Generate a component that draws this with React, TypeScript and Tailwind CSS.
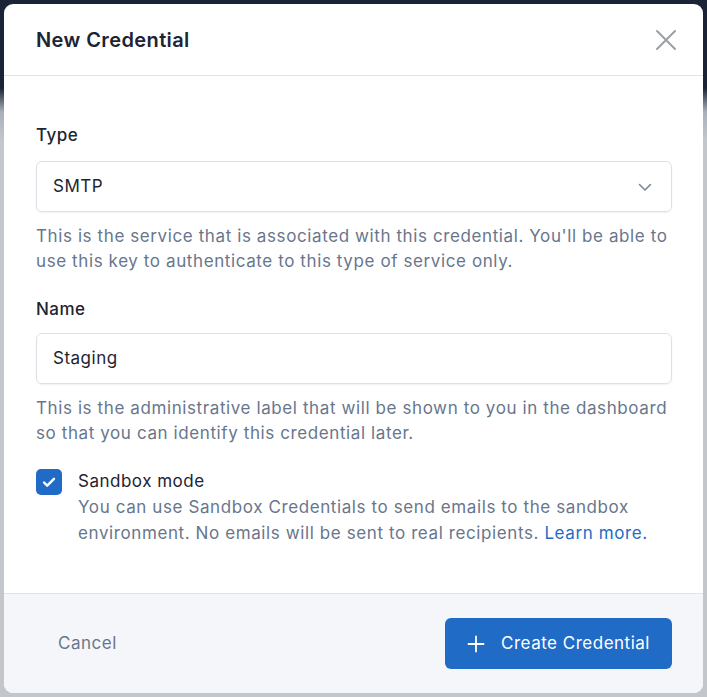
import React from "react";

export default function App() {
  return (
    <div
      className="w-[707px] h-[697px] p-[4px] bg-[linear-gradient(180deg,#1a2436_0px,#1a2436_88px,#a9b0ba_112px,#c3c7cc_140px,#c3c7cc_697px)]"
      style={{ fontFamily: "Inter, 'Noto Sans', sans-serif" }}
    >
      <div className="w-[699px] h-[689px] bg-white rounded-[9px] overflow-hidden flex flex-col tracking-[0.5px]">
        <div className="h-[72px] flex items-center justify-between pl-[32px] pr-[26px] border-b border-[#dfe3ea] shrink-0">
          <h2 className="text-[20px] font-semibold text-[#1d2433] tracking-[0.4px]">New Credential</h2>
          <svg width="22" height="22" viewBox="0 0 22 22" className="text-[#9aa0a8]">
            <path d="M2 2L20 20M20 2L2 20" stroke="currentColor" strokeWidth="2" strokeLinecap="round" />
          </svg>
        </div>
        <div className="flex-1 pl-[32px] pr-[31px] pt-[46px]">
          <label className="block text-[17px] font-medium text-[#1d2433] leading-[26px]">Type</label>
          <div className="mt-[13px] h-[51px] rounded-[6px] border border-[#dde1e7] shadow-[0_1px_2px_rgba(16,24,40,0.06)] flex items-center justify-between pl-[16px] pr-[17px]">
            <span className="text-[17px] text-[#1d2433]">SMTP</span>
            <svg width="18" height="18" viewBox="0 0 18 18" className="text-[#7b8698]">
              <path d="M3.5 6.5l5.5 5.5 5.5-5.5" stroke="currentColor" strokeWidth="1.6" fill="none" strokeLinecap="round" strokeLinejoin="round" />
            </svg>
          </div>
          <p className="mt-[12px] text-[17px] leading-[25px] text-[#68768c] tracking-[0.6px]">
            This is the service that is associated with this credential. You'll be able to use this key to authenticate to this type of service only.
          </p>
          <label className="block mt-[22px] text-[17px] font-medium text-[#1d2433] leading-[26px]">Name</label>
          <div className="mt-[11px] h-[51px] rounded-[6px] border border-[#dde1e7] shadow-[0_1px_2px_rgba(16,24,40,0.06)] flex items-center pl-[16px]">
            <span className="text-[17px] text-[#1d2433]">Staging</span>
          </div>
          <p className="mt-[12px] text-[17px] leading-[25px] text-[#68768c] tracking-[0.6px]">
            This is the administrative label that will be shown to you in the dashboard so that you can identify this credential later.
          </p>
          <div className="mt-[22px] flex items-start gap-[16px]">
            <div className="w-[26px] h-[26px] mt-[1px] rounded-[5px] bg-[#1f6bc6] flex items-center justify-center shrink-0">
              <svg width="18" height="18" viewBox="0 0 18 18">
                <path d="M4 9.5l3.2 3.2L14 5.8" stroke="white" strokeWidth="2.4" fill="none" strokeLinecap="round" strokeLinejoin="round" />
              </svg>
            </div>
            <div>
              <div className="text-[17px] leading-[26px] text-[#1d2433]">Sandbox mode</div>
              <p className="text-[17px] leading-[26px] text-[#68768c] tracking-[0.6px]">
                You can use Sandbox Credentials to send emails to the sandbox environment. No emails will be sent to real recipients.{" "}
                <span className="text-[#1f6bc6]">Learn more.</span>
              </p>
            </div>
          </div>
        </div>
        <div className="h-[100px] bg-[#f5f6fa] border-t border-[#dfe3ea] flex items-center justify-between pl-[54px] pr-[31px] shrink-0">
          <span className="text-[17px] text-[#68768c]">Cancel</span>
          <div className="h-[51px] w-[227px] rounded-[6px] bg-[#1f6bc6] flex items-center justify-center gap-[16px] text-white">
            <svg width="18" height="18" viewBox="0 0 18 18">
              <path d="M9 1.5v15M1.5 9h15" stroke="white" strokeWidth="1.8" strokeLinecap="round" />
            </svg>
            <span className="text-[17px]">Create Credential</span>
          </div>
        </div>
      </div>
    </div>
  );
}
